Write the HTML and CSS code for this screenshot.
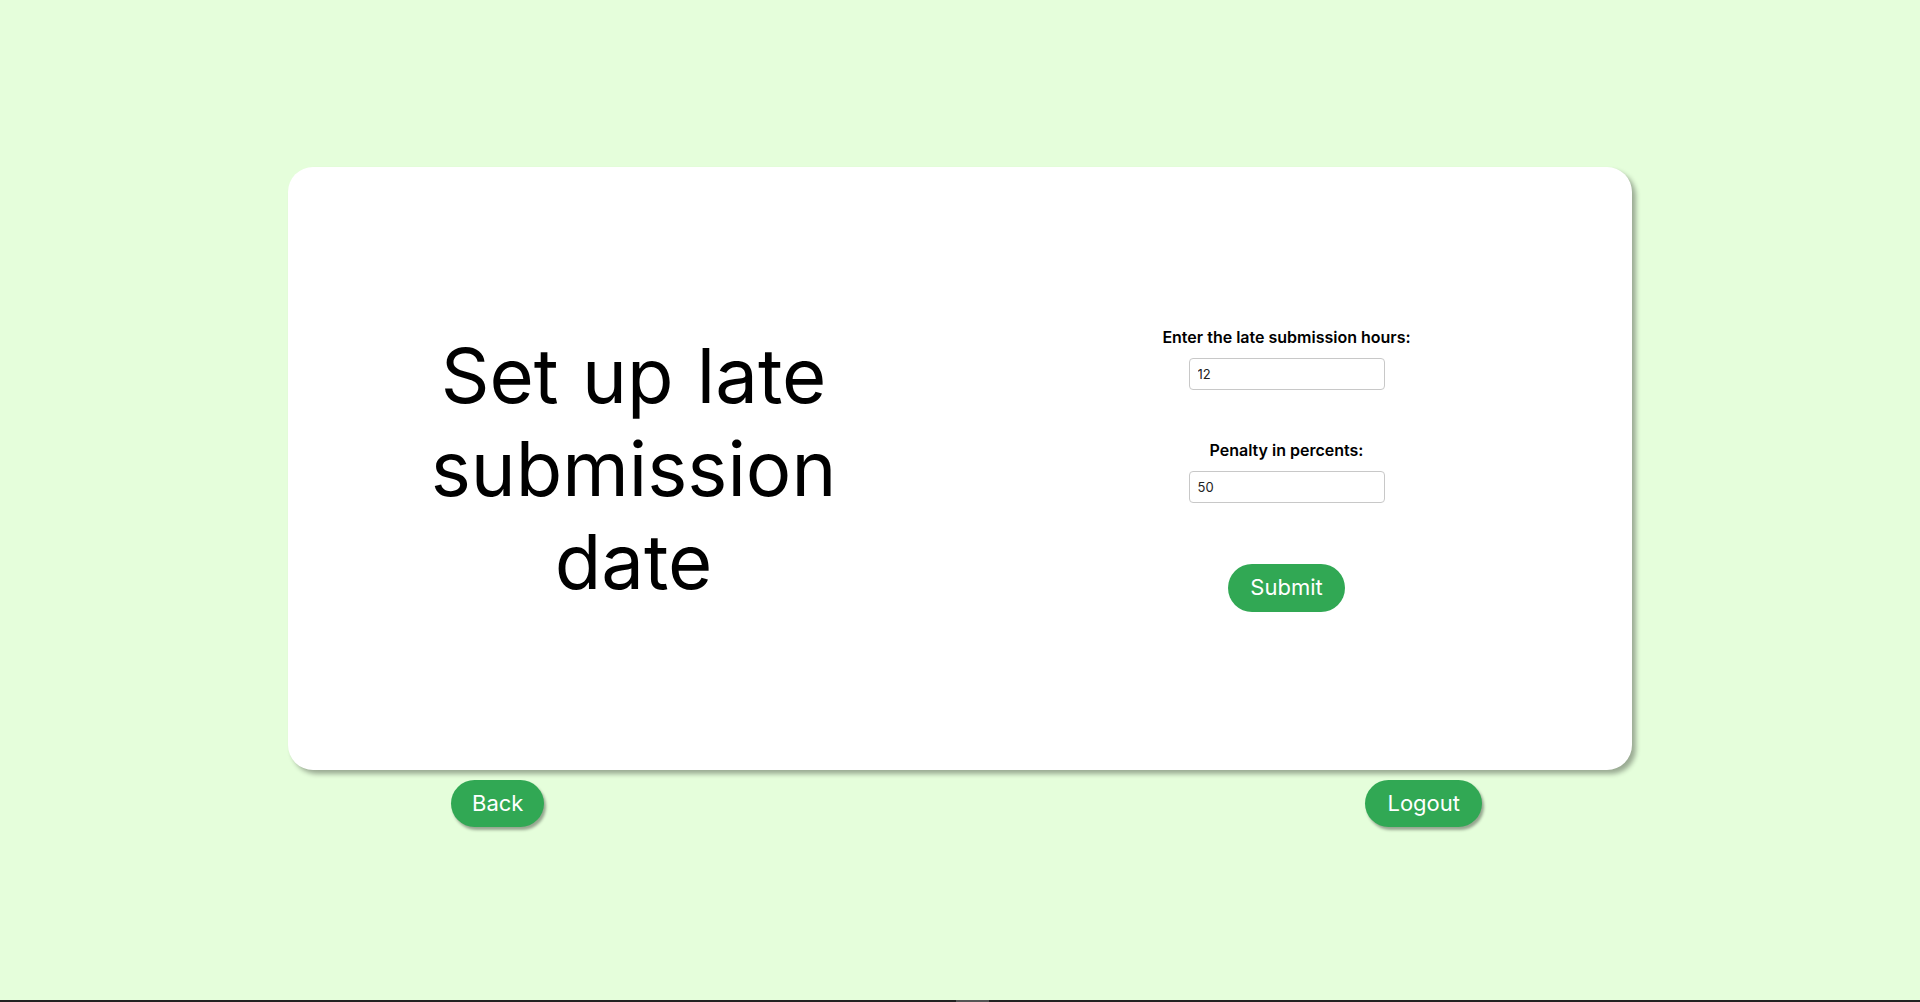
FILE: index.html
```html
<!DOCTYPE html>
<html lang="en">
<head>
<meta charset="utf-8">
<title>Set up late submission date</title>
<link rel="stylesheet" href="styles.css">
</head>
<body>
<div class="page">
  <main class="card">
    <section class="col col-title">
      <h1 class="title">Set up late submission date</h1>
    </section>
    <section class="col col-form">
      <form class="form">
        <label class="field">
          <span class="field-label">Enter the late submission hours:</span>
          <input class="field-input" type="text" value="12">
        </label>
        <label class="field">
          <span class="field-label">Penalty in percents:</span>
          <input class="field-input" type="text" value="50">
        </label>
        <button class="btn btn-submit" type="button">Submit</button>
      </form>
    </section>
  </main>
  <nav class="actions">
    <button class="btn btn-shadow" type="button">Back</button>
    <button class="btn btn-shadow btn-wide" type="button">Logout</button>
  </nav>
</div>
<div class="bar"><span class="bar-thumb"></span></div>
</body>
</html>
```
FILE: styles.css
```css
* { box-sizing: border-box; }
html, body { margin: 0; padding: 0; }
body {
  background: #e5fedb;
  font-family: Inter, "Liberation Sans", sans-serif;
  color: #000;
  overflow: hidden;
}
.page {
  height: 1000px;
  padding-top: 167px;
  display: flex;
  flex-direction: column;
  align-items: center;
}
.card {
  width: 1344px;
  height: 603px;
  background: #fff;
  border-radius: 25px;
  box-shadow: 4px 4px 5px rgba(0, 0, 0, 0.33);
  padding: 0 19px;
  display: grid;
  grid-template-columns: 1fr 1fr;
}
.col {
  display: flex;
  align-items: center;
  justify-content: center;
}
.title {
  margin: 0;
  max-width: 520px;
  text-align: center;
  font-size: 76px;
  font-weight: 400;
  line-height: 93px;
  word-spacing: 2px;
}
.form {
  display: flex;
  flex-direction: column;
  align-items: center;
  margin-top: 2px;
}
.field {
  display: flex;
  flex-direction: column;
  align-items: center;
  gap: 11px;
  margin-bottom: 51px;
}
.field + .field { margin-bottom: 61px; }
.field-label {
  font-size: 16px;
  line-height: 19px;
  font-weight: 600;
  color: #000;
}
.field-input {
  width: 196px;
  height: 32px;
  border: 1px solid #c8c8c8;
  border-radius: 4px;
  padding: 0 8px;
  font-family: Inter, "Liberation Sans", sans-serif;
  font-size: 13px;
  color: #222;
  background: #fff;
  outline: none;
}
.btn {
  border: none;
  background: #31a854;
  color: #fff;
  font-family: Inter, "Liberation Sans", sans-serif;
  font-size: 22px;
  line-height: 27px;
  padding: 10px 20px;
  border-radius: 30px;
  cursor: pointer;
}
.btn-submit {
  height: 48px;
  padding: 0 22px;
}
.btn-shadow {
  height: 47px;
  padding: 0 21px;
  box-shadow: 2px 3px 3px rgba(0, 0, 0, 0.35);
}
.btn-wide { padding: 0 22px; }
.actions {
  width: 1344px;
  margin-top: 10px;
  padding: 0 150px 0 163px;
  display: flex;
  justify-content: space-between;
}
.bar {
  height: 2px;
  background: #222;
}
.bar-thumb {
  display: block;
  margin-left: 956px;
  width: 33px;
  height: 2px;
  background: #555;
}
```
